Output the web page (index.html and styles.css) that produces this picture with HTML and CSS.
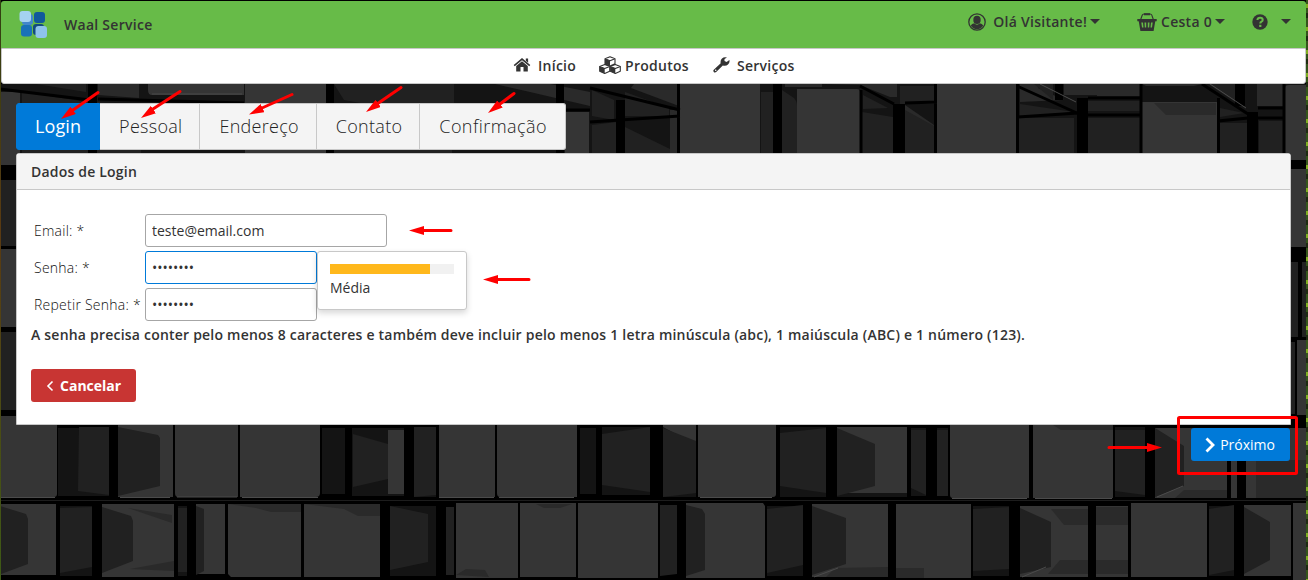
FILE: index.html
```html
<!DOCTYPE html>
<html lang="pt-BR">
<head>
<meta charset="utf-8">
<title>Waal Service</title>
<link rel="stylesheet" href="styles.css">
</head>
<body>
<svg class="backdrop" width="1308" height="580" viewBox="0 0 1308 580" aria-hidden="true">
  <defs>
    <linearGradient id="edge" x1="0" y1="0" x2="0" y2="1"><stop offset="0" stop-color="#304011"/><stop offset=".4" stop-color="#5a3a12"/><stop offset="1" stop-color="#3d5a16"/></linearGradient>
    <pattern id="leaf" width="2" height="23" patternUnits="userSpaceOnUse"><rect width="2" height="23" fill="#34551a"/><rect y="4" width="2" height="4" fill="#7fae20"/><rect y="13" width="2" height="5" fill="#1d2b10"/></pattern>
  </defs>
  <rect width="1308" height="580"/>
  <rect class="deep" y="84" width="1308" height="70"/>
  <path class="deep" d="M58 428h51v68H58zM118 427h55v70h-55zM322 428h23v66h-23zM352 428h52v68h-52zM414 427h22v70h-22zM580 428h16v66h-16zM602 427h48v68h-48zM663 427h33v70h-33zM780 427h46v70h-46zM837 427h70v70h-70zM911 428h15v68h-15zM937 428h11v68h-11zM1115 427h30v70h-30zM60 506h32v70H60zM178 506h9v70h-9zM390 506h46v70h-46zM767 506h36v70h-36zM973 506h36v70h-36zM1209 506h25v70h-25z"/>
  <!-- upper row of cubes -->
  <g class="cube">
    <path d="M1 92h19v73H1zM148 84h96v11H152q-4 0-4-5zM245 84h81v75h-81zM680 84h80v75h-80zM797 89h60q3 0 3 3v70h-63zM937 84h80v75h-80zM1142 102h75v60h-75zM1285 88q0-3 4-3h17v75h-21zM565 112h24v50h-24z"/>
  </g>
  <g class="shade">
    <path d="M98 84h41v14l-41-3zM785 84h37v3h-37zM824 84h73v13h-7l-30-12zM634 84h45v22l-48-18zM1097 84h43v12h-43zM1142 84h60l-8 2h-48zM1257 84h27v22h-27zM905 105l29 20v40h-29zM495 84h55l40 8v14l-60-14zM1154 103h62v12h-50zM670 110h7v50h-7zM1064 84h33v11h-33zM1020 84h20l-2 4 26 12-44 2z"/>
  </g>
  <g class="side">
    <path d="M22 92l66 10v60H22zM36 84h50v8zM91 102l50 2v52H91zM334 84h120v36l-110-20zM334 108l118 18v40H334zM592 90l22 10v20l-22-4zM592 125l25-3v37h-25zM625 127l45 22v20h-45zM625 92l44 16v8h-44zM761 92h12v70h-12zM782 90l12 8q3 3 3 8v60h-15zM863 95l25 13-25 1zM862 112l31 5v45h-31zM905 110l29 16v36h-29zM900 86h34v18h-34zM1020 104l54 8-54 5zM1019 118h55v44h-55zM1034 84h19v16zM1088 101h52v10h-52zM1088 118h52v44h-52zM1208 84h29v19zM1220 108l24 5-24 4zM1219 123h28v40h-28zM1259 121h25v42h-25z"/>
  </g>
  <g class="crack">
    <path d="M88 84h9v76h-9zM326 84h8v76h-8zM556 84h8v76h-8zM616 100h9v60h-9zM773 84h9v76h-9zM893 104h12v56h-12zM1077 98h11v62h-11zM1055 84h8v16h-8zM1235 84h10v22h-10zM1247 112h11v48h-11z"/>
    <path fill="none" stroke="#000" stroke-width="3" d="M0 89l90 11M98 99l146 4M590 88l90 22M590 122l90-6M560 110h30M860 86l34 18M905 103l32-1M1017 86l62 28M1088 98h53M1088 115h53M1018 117l60-4M1202 84l46 30M1218 121l30-3M1258 118h27M1285 108h-27M1017.500 84v76M861 90v66M678.500 84v76M935.500 84v76M1141 84v76M1218.500 98v62M1284 84v76"/>
  </g>
  <!-- cubes beside the panel -->
  <g class="cube"><path d="M1 249h15v78H1zM1 416h15v12H1zM1291 169h15v78h-15zM1297 340h9v75h-9z"/></g>
  <g class="side"><path d="M1 180h15v66H1zM1 332h15v78H1zM1291 262h7v75h-7zM1302 262h4v75h-4zM1291 342h4v72h-4z"/></g>
  <!-- first lower row -->
  <g class="cube">
    <path d="M0 425h57v69q0 3-3 3H0zM118 425h55v72h-55zM175 425h63v72h-60q-3 0-3-4zM240 425h80v68q0 4-4 4h-76zM388 430h16v64h-16zM439 425h56v72h-56zM497 425h80v72h-77q-3 0-3-4zM663 425h33v20l-33-18zM698 425h78v69q0 3-3 3h-75zM837 427h70v66h-70zM950 425h79v73h-76q-3 0-3-3zM1033 425h80v73h-80zM1155 428h72v70h-72zM1231 428h6v70h-6zM1246 428h60v70h-60z"/>
  </g>
  <g class="side">
    <path d="M79 427h30v68l-31-4zM118 427l40 8 2 3v48l-42 10zM353 434l35 10v35l-35 8zM414 427h22v68l-22 2zM602 434l48-7v65l-48-7zM663 428l33 13v52l-33 4zM780 433l46-5v65l-46-7zM837 428l38 16v42l-38 10zM911 430h15v65l-15-7zM937 430h11v66h-11zM1115 430h30v65l-30-4zM1155 428l29 18v40l-29 11z"/>
  </g>
  <g class="shade"><path d="M1184 490h43v8h-52zM1256 460h50v38h-50zM1053 425h60v5h-52z"/></g>
  <!-- second lower row -->
  <g class="cube">
    <path d="M0 504h56v71H0zM102 504h72v73h-72zM196 504h29v70h-29zM228 504h73v73h-70l-3-3zM304 504h76v73h-76zM456 503h62v75h-62zM520 503h56v74h-56zM578 503h80v75h-80zM686 503h77l2 3v72h-79zM812 504h76v73h-76zM896 504h75v74h-75zM1020 506h68v71h-68zM1096 506h32v71h-32zM1131 503h76v74h-76zM1244 505h47v71h-47zM1293 503h13v77h-13z"/>
  </g>
  <g class="side">
    <path d="M0 506l26 8 2 5v45l-27 10zM60 508l32-1v60l-32 6zM102 507l29 9 2 5v40l-31 12zM178 508h9v64h-9zM196 506l8 3v62l-8 4zM390 506l38 8v48l-38 8zM446 507h8v68h-8zM660 505h17v69l-17 2zM686 505l16 4 3 5v56l-19 6zM767 509l36-4v60l-36 8zM812 506l34 12v46l-34 11zM973 509l36-2v62l-36 2zM1020 508l31 14v45l-31 7zM1209 509l25-4v65l-25 5zM1244 507l26 15v38l-26 14z"/>
  </g>
  <g class="shade"><path d="M228 504h73v8h-30l-15-4zM304 504h76v12h-22l-14-7zM128 508l44 7v8zM130 569l44-8v10zM456 575l10-6 19 1 4 7zM835 568l53-1v10h-62zM896 568h28v10h-28zM1051 509h37v16h-24zM1060 560h28v14h-40zM1096 507h32v18h-32zM1096 560h32v14h-32zM536 504h36l-12 4h-16z"/></g>
  <g class="glint"><path d="M0 497.500h55M120 497.500h50M177 497h60M242 497.500h76M439 497.500h55M499 497.500h75M700 497.500h72M952 498.500h75M1035 498.500h77M814 577l24-9M1022 577l24-10M1157 497l26-11M152 94h90M1040 84l36 18M1210 84l36 24"/></g>
  <path class="seam" d="M0 500.500h1306"/>
  <rect width="1" height="580" fill="url(#edge)"/>
  <rect x="1306" width="2" height="580" fill="url(#leaf)"/>
</svg>

<header class="topbar">
  <div class="brand">
    <svg class="brand-logo" width="30" height="30" viewBox="0 0 30 30" aria-hidden="true">
      <rect x="4" y="4" width="11" height="11" rx="3" fill="#4287cc"/>
      <rect x="16" y="2" width="11" height="11" rx="3" fill="#11599c"/>
      <rect x="1.500" y="1" width="11.500" height="11" rx="3" fill="#a4d2f0"/>
      <rect x="15" y="14" width="11" height="11" rx="3" fill="#124a80"/>
      <rect x="3" y="15" width="11" height="11.500" rx="3" fill="#1971b8"/>
      <rect x="17.500" y="16" width="11.500" height="12" rx="3" fill="#8ec3eb"/>
    </svg>
    <span>Waal Service</span>
  </div>
  <nav class="account">
    <a class="account-item user">
      <svg width="18" height="18" viewBox="0 0 18 18"><circle cx="9" cy="9" r="8.200" fill="none" stroke="#333" stroke-width="1.300"/><ellipse cx="9" cy="6.900" rx="3.700" ry="4.100"/><path d="M2.700 12.500Q4 10.500 6.200 10.300Q9 13 11.800 10.300Q14 10.500 15.300 12.500Q13 16.200 9 16.200T2.700 12.500z"/></svg>
      <span>Olá Visitante!</span><i class="caret"></i>
    </a>
    <a class="account-item basket">
      <svg width="20" height="18" viewBox="0 0 20 18"><path d="M3.500 7L5.200 2.200Q5.600 1 7 1h6q1.400 0 1.800 1.200L16.500 7" fill="none" stroke="#333" stroke-width="1.100"/><path d="M7 .3h6v2H7zM.3 6h19.400v2.300H.3z"/><path fill-rule="evenodd" d="M1.700 8h16.600l-1.700 10H3.400zM4.300 9.500l.7 5h1.500l-.5-5zM7.500 9.500l.3 5h1.400v-5zM10.800 9.500v5h1.400l.3-5zM14 9.500l-.5 5H15l.7-5z"/></svg>
      <span>Cesta 0</span><i class="caret"></i>
    </a>
    <a class="account-item help">
      <svg width="16" height="16" viewBox="0 0 16 16"><circle cx="8" cy="8" r="7.700"/><path d="M5.400 6Q5.600 3.800 8.100 3.800Q10.700 3.800 10.700 6Q10.700 7.100 9.500 7.700Q8.300 8.300 8.300 9.500" fill="none" stroke="#67bb48" stroke-width="2"/><path d="M7.200 10.800h2.200V13H7.200z" fill="#67bb48"/></svg>
      <i class="caret"></i>
    </a>
  </nav>
</header>

<nav class="menubar">
  <a class="menu-item home"><svg width="18" height="16" viewBox="0 0 18 16"><path d="M9 1l8.300 7-1 1.200L9 3.200 1.700 9.200.7 8z"/><path d="M12.800 1.500h2.300v4.300l-2.300-2z"/><path d="M9 4.300l5.800 4.800V14.500h-4.300V10h-3v4.500H3.200V9.100z"/></svg><span>Início</span></a>
  <a class="menu-item products"><svg width="22" height="18" viewBox="0 0 22 18"><g fill="#fff" stroke="#333" stroke-width="1.100" stroke-linejoin="round"><path d="M11 .8l5 2v5l-5 2.300-5-2.300v-5zM5.700 8.500l5 2v4.700l-5 2.200-5-2.200v-4.700zM16.300 8.500l5 2v4.700l-5 2.200-5-2.200v-4.700z"/><path d="M6 2.800l5 2 5-2M.7 10.500l5 2 5-2M11.300 10.500l5 2 5-2"/></g><path d="M6 2.800l5 2v5.300l-5-2.300zM.7 10.500l5 2v4.900l-5-2.200zM11.300 10.500l5 2v4.900l-5-2.200z"/></svg><span>Produtos</span></a>
  <a class="menu-item services"><svg width="17" height="16" viewBox="0 0 17 16"><path fill-rule="evenodd" d="M16.400 3.100L13.600 5 11.500 4V2.100L14 .5Q11-.5 9 1.500T7.700 6.300L.8 12.700q-1 1 0 2.200t2.400.2L9.800 8.400q3.200.8 5.200-1t1.400-4.300zM2.700 12.500a.8.800 0 1 1 0 1.600.8.800 0 0 1 0-1.600z"/></svg><span>Serviços</span></a>
</nav>

<main class="content">
  <div class="tabs">
    <a class="tab active">Login</a><a class="tab">Pessoal</a><a class="tab">Endereço</a><a class="tab">Contato</a><a class="tab">Confirmação</a>
  </div>
  <section class="panel">
    <h2 class="panel-title">Dados de Login</h2>
    <div class="panel-body">
      <form class="fields">
        <label for="email">Email: *</label><input id="email" class="field wide" type="text" value="teste@email.com">
        <label for="senha">Senha: *</label>
        <div class="password"><input id="senha" class="field focused" type="password" value="12345678">
          <div class="strength"><div class="meter"><div class="meter-value"></div></div><span>Média</span></div>
        </div>
        <label for="repetir">Repetir Senha: *</label><input id="repetir" class="field" type="password" value="12345678">
      </form>
      <p class="hint">A senha precisa conter pelo menos 8 caracteres e também deve incluir pelo menos 1 letra minúscula (abc), 1 maiúscula (ABC) e 1 número (123).</p>
      <button class="btn cancel"><svg width="8" height="12" viewBox="0 0 8 12"><path d="M6.500 1.500L2 6l4.500 4.500"/></svg>Cancelar</button>
    </div>
  </section>
  <div class="actions"><button class="btn next"><svg width="10" height="16" viewBox="0 0 10 16"><path d="M1.500 1.500L8 8l-6.500 6.500"/></svg>Próximo</button></div>
</main>

<svg class="marks" width="1308" height="580" viewBox="0 0 1308 580" aria-hidden="true">
  <defs><marker id="tip" viewBox="0 0 15 9" refX="15" refY="4.500" markerWidth="15" markerHeight="9" markerUnits="userSpaceOnUse" orient="auto"><path d="M0 0l15 4.500L0 9z" fill="#f00"/></marker></defs>
  <g class="stems">
    <path d="M98 92.500L73 110M180 91.500L153 109M292 94.500L262 108M401 87.500L377 104M514 93.500L498 105.500M451 230.500H420M529 279.500H495M1109 447.500H1150"/>
  </g>
  <g marker-end="url(#tip)" fill="none">
    <path d="M98 92.500L61 119"/><path d="M180 91.500L141 118"/><path d="M292 94.500L249 114.500"/><path d="M401 87.500L366 112"/><path d="M514 93.500L488 113"/><path d="M451 230.500H409"/><path d="M529 279.500H483"/><path d="M1109 447.500H1162"/>
  </g>
  <rect x="1178.500" y="417.500" width="118" height="56" rx="1" fill="none" stroke="#f00" stroke-width="3"/>
</svg>
</body>
</html>
```
FILE: styles.css
```css
* { box-sizing: border-box; }
body {
  margin: 0;
  height: 580px;
  padding: 1px 2px 0 1px;
  overflow: hidden;
  position: relative;
  background: #000;
  color: #333;
  font: 14px/19px "Open Sans", sans-serif;
}
svg { display: block; flex: none; fill: #333; }
.backdrop, .marks { position: absolute; top: 0; left: 0; }
.backdrop { z-index: -1; fill: #000; }
.marks { z-index: 5; pointer-events: none; }
.cube { fill: #353535; }
.side { fill: #212121; }
.shade { fill: #2a2a2a; }
.deep { fill: #141414; }
.crack { fill: #000; }
.seam { fill: none; stroke: #1d1d1d; }
.glint { fill: none; stroke: #4b4b4b; stroke-width: 1; }
.stems { fill: none; stroke: #f00; stroke-width: 3; stroke-linecap: round; }

.topbar {
  height: 47px;
  display: flex;
  justify-content: space-between;
  background: #67bb48;
  border-radius: 3px 3px 0 0;
  font-weight: 600;
  letter-spacing: .27px;
}
.brand { display: flex; align-items: center; gap: 16px; padding-left: 17px; }
.account { display: flex; align-items: center; height: 41px; padding-right: 15px; }
.account-item { display: flex; align-items: center; }
.user { gap: 7px; margin-right: 37px; }
.basket { gap: 4px; margin-right: 27px; }
.help { gap: 13px; }
.user .caret { margin-left: -4px; }
.basket .caret { margin-left: -1px; }
.caret { border: 5px solid transparent; border-top-color: #333; border-bottom: 0; }

.menubar {
  height: 36px;
  display: flex;
  padding: 0 0 2px 511px;
  align-items: center;
  background: #fff;
  border: 1px solid #c8c8c8;
  border-radius: 0 0 3px 3px;
  font-weight: 600;
  letter-spacing: .27px;
}
.menu-item { display: flex; align-items: center; }
.home { gap: 7px; margin-right: 23px; }
.products { gap: 4px; margin-right: 24px; }
.services { gap: 7px; }

.content { padding: 19px 15px 0; }
.tabs {
  display: flex;
  width: max-content;
  height: 47px;
  margin-bottom: 3px;
  font-size: 18px;
  font-weight: 300;
  letter-spacing: .28px;
}
.tab {
  padding: 10px 17px 10px 19px;
  line-height: 25px;
  color: #222;
  background: #f4f4f4;
  border: 1px solid #c8c8c8;
  border-left-width: 0;
}
.tab.active { padding: 10px 18px; letter-spacing: .1px; color: #fff; background: #007ad9; border: 1px solid #007ad9; border-radius: 3px 0 0 3px; font-weight: 400; }
.tab:last-child { padding-right: 18px; letter-spacing: .43px; border-radius: 0 3px 3px 0; }
.panel { height: 272px; background: #fff; border: 1px solid #c8c8c8; border-radius: 3px 3px 0 0; }
.panel-title { margin: 0; padding: 8px 14px 9px; height: 36px; font-size: 14px; line-height: 19px; font-weight: 600; letter-spacing: .2px; background: #f4f4f4; border-bottom: 1px solid #c8c8c8; }
.panel-body { padding: 24px 14px; }
.fields { display: grid; grid-template-columns: 114px max-content; row-gap: 4px; align-items: center; }
.fields label { padding-left: 3px; white-space: nowrap; font-weight: 300; letter-spacing: .25px; color: #111; }
.field { display: block; width: 172px; height: 33px; padding: 6px; font: 14px/19px "Open Sans", sans-serif; color: #333; background: #fff; border: 1px solid #a6a6a6; border-radius: 3px; outline: 0; }
.wide { width: 242px; }
.focused { border-color: #007ad9; }
.password { position: relative; }
.strength {
  position: absolute;
  z-index: 2;
  left: 172px;
  top: 0;
  width: 150px;
  height: 59px;
  padding: 12px;
  background: #fff;
  border: 1px solid #c8c8c8;
  border-radius: 3px;
  box-shadow: 0 3px 6px rgba(0, 0, 0, .16);
}
.meter { height: 10px; margin-bottom: 4px; background: #f1f1f1; }
.meter-value { width: 100px; height: 10px; background: #ffb81c; }
.hint { margin: 4px 0 25px; font-weight: 600; letter-spacing: .213px; white-space: nowrap; }
.btn { display: flex; align-items: center; height: 33px; padding: 0 15px; border: 0; border-radius: 3px; color: #fff; font: 400 14px/19px "Open Sans", sans-serif; }
.btn svg { fill: none; stroke: #fff; stroke-width: 1.6; }
.cancel { gap: 6px; background: #c83533; font-weight: 700; }
.next { gap: 5px; padding: 0 15px 0 14px; background: #007ad9; }
.next svg { stroke-width: 2.8; }
.actions { display: flex; justify-content: flex-end; padding: 3px 1px 0 0; }
```
